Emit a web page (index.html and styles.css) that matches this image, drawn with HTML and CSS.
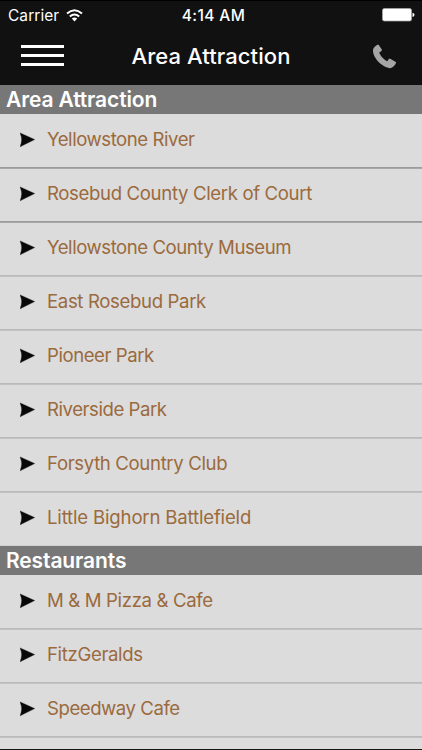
FILE: index.html
```html
<!DOCTYPE html>
<html lang="en">
<head>
<meta charset="utf-8">
<title>Area Attraction</title>
<link rel="stylesheet" href="styles.css">
</head>
<body>
<svg class="defs" aria-hidden="true"><symbol id="arrow" viewBox="0 0 16 16"><path d="M-.3 .5 15 7.6-.3 15.1Q3.2 7.8-.3 .5Z" fill="#080808" stroke="#777" stroke-width=".3"/></symbol></svg>
<div class="screen">
  <header class="top">
    <div class="status">
      <div class="carrier"><span>Carrier</span>
        <svg class="wifi" width="17" height="13" viewBox="0 0 17 13"><g fill="none" stroke="#fff" stroke-width="2"><path d="M1 4.5Q8.5-2 16 4.5"/><path d="M3.8 7.6Q8.5 3.4 13.2 7.6"/></g><path d="M5.8 9.6Q8.5 7.4 11.2 9.6L8.5 12.5Z" fill="#fff"/></svg>
      </div>
      <time class="clock">4:14 AM</time>
      <svg class="battery" width="33" height="14" viewBox="0 0 33 14"><rect x=".5" y=".5" width="29" height="12.5" rx="1.8" fill="#fff" stroke="#aaa" stroke-width=".7"/><path d="M30.5 4.7Q32.5 5 32.5 6.8T30.5 8.9Z" fill="#fff"/></svg>
    </div>
    <nav class="nav">
      <div class="menu"><i></i><i></i><i></i></div>
      <h1>Area Attraction</h1>
      <svg class="phone" width="25" height="25" viewBox="0 0 25 25"><path d="M1.2 5.1C2.5 2.5 4.6.9 6.4.6L10 5.8C9.7 7.2 8.3 8 7.2 8.4C8.3 11.8 12 15.7 15.5 17.2C15.8 16 16.4 14.9 17.8 14.4L24.2 18.3C23.8 20.8 21.3 23.3 18.5 24.2C9.6 23.5-.5 12.5 1.2 5.1Z" fill="#a5a5a5"/></svg>
    </nav>
  </header>
  <main>
    <h2>Area Attraction</h2>
    <ul>
      <li class="dark"><svg><use href="#arrow"/></svg><span class="tight">Yellowstone River</span></li>
      <li class="dark"><svg><use href="#arrow"/></svg><span>Rosebud County Clerk of Court</span></li>
      <li><svg><use href="#arrow"/></svg><span class="tight">Yellowstone County Museum</span></li>
      <li><svg><use href="#arrow"/></svg><span>East Rosebud Park</span></li>
      <li><svg><use href="#arrow"/></svg><span class="tight">Pioneer Park</span></li>
      <li><svg><use href="#arrow"/></svg><span class="tight">Riverside Park</span></li>
      <li><svg><use href="#arrow"/></svg><span>Forsyth Country Club</span></li>
      <li><svg><use href="#arrow"/></svg><span class="loose">Little Bighorn Battlefield</span></li>
    </ul>
    <h2>Restaurants</h2>
    <ul>
      <li><svg><use href="#arrow"/></svg><span>M &amp; M Pizza &amp; Cafe</span></li>
      <li><svg><use href="#arrow"/></svg><span>FitzGeralds</span></li>
      <li class="last"><svg><use href="#arrow"/></svg><span class="tight">Speedway Cafe</span></li>
    </ul>
    <div class="rest"></div>
  </main>
</div>
</body>
</html>
```
FILE: styles.css
```css
* { box-sizing: border-box; margin: 0; padding: 0; }
body { font-family: Inter, "Liberation Sans", sans-serif; background: #dcdcdc; }
.defs { display: none; }
.screen { width: 422px; height: 750px; overflow: hidden; display: flex; flex-direction: column; border-bottom: 1px solid #151515; }
.top { flex: 0 0 85px; background: #111; border-top: 1px solid #000; color: #fff; }
.status { height: 28px; display: grid; grid-template-columns: 1fr auto 1fr; align-items: center; padding: 0 7px 0 8px; }
.carrier { display: flex; align-items: center; gap: 7px; font-size: 15.5px; }
.carrier span { letter-spacing: .05px; }
.clock { font-size: 15.5px; font-weight: 500; letter-spacing: .4px; padding-left: 4px; }
.battery { justify-self: end; }
.nav { height: 56px; display: grid; grid-template-columns: 1fr auto 1fr; align-items: center; padding: 0 25px 0 21px; }
.menu { width: 43px; height: 21px; display: flex; flex-direction: column; justify-content: space-between; margin-top: -4px; }
.menu i { height: 3px; background: #fff; }
h1 { font-size: 22px; line-height: 28px; font-weight: 500; letter-spacing: .08px; margin-top: -2px; padding-left: 4px; }
.phone { justify-self: end; margin-top: -2px; }
h2 { height: 29px; line-height: 29px; padding-left: 6px; background: #777; color: #fff; font-size: 21px; font-weight: 600; letter-spacing: -.12px; }
ul { list-style: none; }
li { height: 54px; display: flex; align-items: center; gap: 11px; padding: 0 0 2px 20px; border-bottom: 1px solid #bababa; background: #dcdcdc; color: #9b6a3d; font-size: 18.6px; letter-spacing: -.36px; }
li + li, .rest { border-top: 1px solid #c2c2c2; }
li + li { padding-bottom: 3px; }
li.dark { border-bottom-color: #9b9b9b; }
li.dark + li { border-top-color: #a8a8a8; }
li:last-child { border-bottom-color: #cfcfcf; }
li.last { border-bottom-color: #bababa; }
li svg { width: 16px; height: 16px; overflow: visible; }
li span { margin-top: -1px; }
li .loose { letter-spacing: -.18px; }
li .tight { letter-spacing: -.46px; }
.rest { height: 12px; }
```
